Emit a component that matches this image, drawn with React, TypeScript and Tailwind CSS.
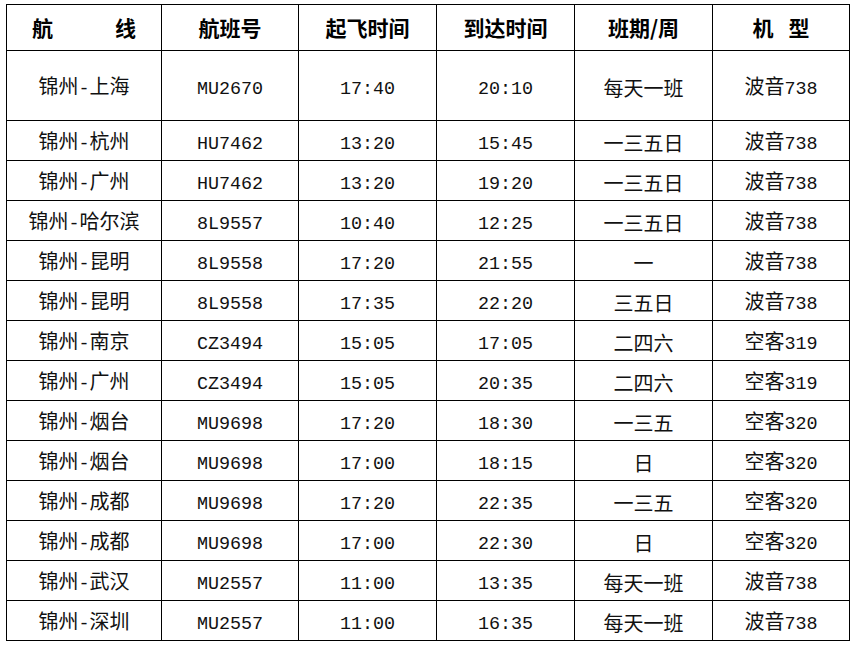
const rows: string[][] = [
  ['锦州-上海', 'MU2670', '17:40', '20:10', '每天一班', '波音738'],
  ['锦州-杭州', 'HU7462', '13:20', '15:45', '一三五日', '波音738'],
  ['锦州-广州', 'HU7462', '13:20', '19:20', '一三五日', '波音738'],
  ['锦州-哈尔滨', '8L9557', '10:40', '12:25', '一三五日', '波音738'],
  ['锦州-昆明', '8L9558', '17:20', '21:55', '一', '波音738'],
  ['锦州-昆明', '8L9558', '17:35', '22:20', '三五日', '波音738'],
  ['锦州-南京', 'CZ3494', '15:05', '17:05', '二四六', '空客319'],
  ['锦州-广州', 'CZ3494', '15:05', '20:35', '二四六', '空客319'],
  ['锦州-烟台', 'MU9698', '17:20', '18:30', '一三五', '空客320'],
  ['锦州-烟台', 'MU9698', '17:00', '18:15', '日', '空客320'],
  ['锦州-成都', 'MU9698', '17:20', '22:35', '一三五', '空客320'],
  ['锦州-成都', 'MU9698', '17:00', '22:30', '日', '空客320'],
  ['锦州-武汉', 'MU2557', '11:00', '13:35', '每天一班', '波音738'],
  ['锦州-深圳', 'MU2557', '11:00', '16:35', '每天一班', '波音738'],
]

const widths = ['w-[155px]', 'w-[137px]', 'w-[138px]', 'w-[138px]', 'w-[138px]', 'w-[137px]']

// split into CJK / latin runs so the latin glyphs can be a bit narrower
function Mixed({ text }: { text: string }) {
  const runs = text.match(/[\u4e00-\u9fff]+|[^\u4e00-\u9fff]+/g) || []
  return (
    <>
      {runs.map((r, i) =>
        /[\u4e00-\u9fff]/.test(r) ? (
          <span key={i}>{r}</span>
        ) : (
          <span key={i} className="text-[18.4px] font-['Liberation_Mono',monospace]">{r}</span>
        )
      )}
    </>
  )
}

export default function App() {
  return (
    <div className="min-h-screen bg-white pl-[6px] pt-[4px]">
      <table className="table-fixed border-collapse text-[#111] font-['Noto_Sans_CJK_SC',sans-serif]">
        <colgroup>
          {widths.map((w, i) => (
            <col key={i} className={w} />
          ))}
        </colgroup>
        <thead>
          <tr className="h-[46px] text-[21px] font-bold text-black">
            <th className="border border-black px-[25px]">
              <div className="flex justify-between">
                <span>航</span>
                <span>线</span>
              </div>
            </th>
            <th className="border border-black">航班号</th>
            <th className="border border-black">起飞时间</th>
            <th className="border border-black">到达时间</th>
            <th className="border border-black">班期/周</th>
            <th className="border border-black">
              <span className="mr-[15px]">机</span>
              <span>型</span>
            </th>
          </tr>
        </thead>
        <tbody>
          {rows.map((r, i) => (
            <tr key={i} className={`${i === 0 ? 'h-[70px]' : 'h-[40px]'} text-[20px] leading-none`}>
              {r.map((c, j) => (
                <td key={j} className="border border-black text-center p-0 pt-[4px]">
                  <Mixed text={c} />
                </td>
              ))}
            </tr>
          ))}
        </tbody>
      </table>
    </div>
  )
}
